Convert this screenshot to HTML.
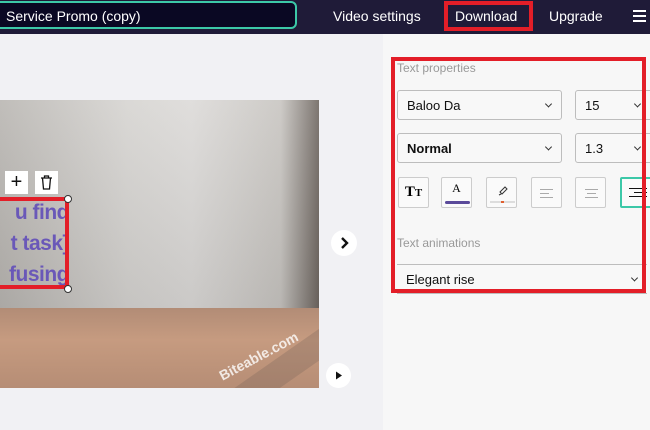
<!DOCTYPE html>
<html><head><style>
*{box-sizing:border-box;margin:0;padding:0}
body{width:650px;height:430px;overflow:hidden;font-family:"Liberation Sans",sans-serif;background:#f1f1f4;position:relative}
.hdr{position:absolute;left:0;top:0;width:650px;height:34px;background:#1f1b38}
.title{position:absolute;left:-10px;top:1px;width:307px;height:28px;background:#0a0823;border:2px solid #3cc8a8;border-radius:6px;color:#fff;font-size:14px;padding:5px 0 0 14px}
.nav{position:absolute;top:8px;color:#fff;font-size:14px}
.panel{position:absolute;left:383px;top:34px;width:267px;height:396px;background:#f7f7f7}
.red{position:absolute;border:4px solid #e31e28}
.sel{position:absolute;background:#f8f8f8;border:1px solid #bdbdbd;border-radius:3px;font-size:13px;color:#111;padding:0 0 0 9px;display:flex;align-items:center}
.sel .c{position:absolute;right:10px;top:50%;width:5px;height:5px;border-right:1.3px solid #333;border-bottom:1.3px solid #333;transform:translateY(-70%) rotate(45deg)}
.lbl{position:absolute;font-size:12px;color:#999}
.btn{position:absolute;top:177px;width:31px;height:31px;border:1px solid #ccc;border-radius:2px;background:#fafafa}
.ln{position:absolute;height:1px;background:#aaa}
</style></head><body>
<div class="hdr"></div>
<div class="title">Service Promo (copy)</div>
<div class="nav" style="left:333px">Video settings</div>
<div class="red" style="left:444px;top:1px;width:89px;height:30px"></div>
<div class="nav" style="left:455px">Download</div>
<div class="nav" style="left:549px">Upgrade</div>
<div style="position:absolute;left:633px;top:10px;width:13px;height:2px;background:#fff;box-shadow:0 5px 0 #fff,0 10px 0 #fff"></div>

<!-- image -->
<div style="position:absolute;left:0;top:100px;width:319px;height:288px;overflow:hidden;background:linear-gradient(90deg,#b9b6b2 0%,#d6d4d1 40%,#dcdad8 60%,#c8c5c1 88%,#6f6761 100%)">
 <div style="position:absolute;left:0;top:0;width:100%;height:210px;background:linear-gradient(180deg,rgba(255,255,255,0.1),rgba(0,0,0,0.08))"></div>
 <div style="position:absolute;left:0;top:208px;width:100%;height:80px;background:linear-gradient(180deg,#b28c76,#c69b80 40%,#b68d75)"></div>
 <div style="position:absolute;left:190px;top:245px;width:220px;height:26px;background:rgba(120,100,90,0.3);transform:rotate(-35deg)"></div>
 <div style="position:absolute;left:215px;top:248px;color:rgba(255,255,255,0.8);font-weight:bold;font-size:14px;transform:rotate(-28deg)">Biteable.com</div>
 <div style="position:absolute;left:-40px;top:97px;width:109px;height:91px;color:#6a58b8;font-weight:bold;font-size:21px;line-height:31px;text-align:right;overflow:hidden;white-space:nowrap;letter-spacing:-0.5px">u find<br>t task]<br>fusing</div>
</div>
<div class="red" style="left:-4px;top:197px;width:73px;height:92px"></div>
<div style="position:absolute;left:64px;top:195px;width:8px;height:8px;border-radius:50%;background:#fff;border:1px solid #333"></div>
<div style="position:absolute;left:64px;top:285px;width:8px;height:8px;border-radius:50%;background:#fff;border:1px solid #333"></div>
<div style="position:absolute;left:5px;top:171px;width:23px;height:23px;background:#fff;font-size:20px;line-height:22px;text-align:center;color:#111">+</div>
<div style="position:absolute;left:35px;top:171px;width:23px;height:23px;background:#fff">
<svg width="23" height="23" viewBox="0 0 23 23" fill="none" stroke="#111" stroke-width="1.3"><path d="M6 7h11M9.5 7V5h4v2M7.5 7l1 11h6l1-11"/></svg></div>
<div style="position:absolute;left:331px;top:230px;width:26px;height:26px;border-radius:50%;background:#fff">
<svg width="26" height="26"><path d="M11 8l5 5-5 5" stroke="#111" stroke-width="2.4" fill="none"/></svg></div>
<div style="position:absolute;left:326px;top:363px;width:25px;height:25px;border-radius:50%;background:#fff">
<svg width="25" height="25"><path d="M10 8.5l6 4-6 4z" fill="#111"/></svg></div>

<div class="panel"></div>
<div class="lbl" style="left:397px;top:61px">Text properties</div>
<div class="sel" style="left:397px;top:90px;width:165px;height:30px">Baloo Da<span class="c"></span></div>
<div class="sel" style="left:575px;top:90px;width:85px;height:30px">15<span class="c" style="right:19px"></span></div>
<div class="sel" style="left:397px;top:133px;width:165px;height:30px;font-weight:bold">Normal<span class="c"></span></div>
<div class="sel" style="left:575px;top:133px;width:85px;height:30px">1.3<span class="c" style="right:19px"></span></div>
<div class="btn" style="left:398px;font-family:'Liberation Serif',serif;font-weight:bold;font-size:15px;text-align:center;line-height:29px">T<span style="font-size:11px">T</span></div>
<div class="btn" style="left:441px;text-align:center;font-family:'Liberation Serif',serif;font-size:12px;line-height:20px">A<div style="position:absolute;left:3px;top:23px;width:25px;height:3px;border-radius:2px;background:#5a4a9a"></div></div>
<div class="btn" style="left:486px"><svg width="31" height="31"><path d="M13 14l5-5 2 2-5 5zM12 17l2-1" stroke="#333" fill="none"/><rect x="3" y="23" width="25" height="2" fill="#ddd"/><rect x="14" y="23" width="3" height="2" fill="#e06030"/></svg></div>
<div class="btn" style="left:531px"><div class="ln" style="left:8px;top:11px;width:13px"></div><div class="ln" style="left:8px;top:15px;width:9px"></div><div class="ln" style="left:8px;top:19px;width:13px"></div></div>
<div class="btn" style="left:575px"><div class="ln" style="left:9px;top:11px;width:13px"></div><div class="ln" style="left:11px;top:15px;width:9px"></div><div class="ln" style="left:9px;top:19px;width:13px"></div></div>
<div class="btn" style="left:620px;border:2px solid #3cc8a8;width:40px"><div class="ln" style="left:7px;top:9px;width:18px;background:#111"></div><div class="ln" style="left:12px;top:13px;width:13px;background:#111"></div><div class="ln" style="left:7px;top:17px;width:18px;background:#111"></div></div>
<div class="lbl" style="left:397px;top:236px">Text animations</div>
<div class="sel" style="left:397px;top:264px;width:250px;height:30px;border-left:none;border-right:none;border-radius:0">Elegant rise<span class="c"></span></div>
<div class="red" style="left:391px;top:57px;width:255px;height:236px"></div>
</body></html>
